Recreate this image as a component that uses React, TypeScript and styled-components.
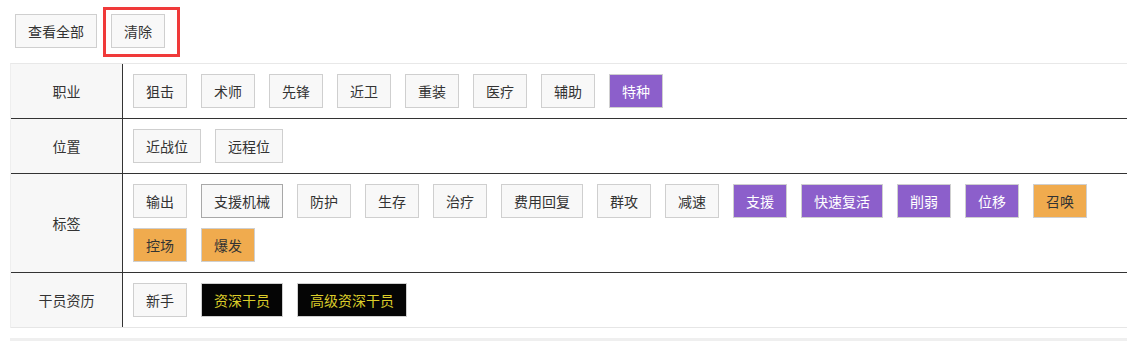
import styled, { createGlobalStyle } from 'styled-components'

type Variant = 'plain' | 'outlined' | 'purple' | 'orange' | 'elite'

interface TagItem {
  label: string
  variant?: Variant
}

interface FilterRow {
  title: string
  tags: TagItem[]
}

const rows: FilterRow[] = [
  {
    title: '职业',
    tags: [
      { label: '狙击' },
      { label: '术师' },
      { label: '先锋' },
      { label: '近卫' },
      { label: '重装' },
      { label: '医疗' },
      { label: '辅助' },
      { label: '特种', variant: 'purple' },
    ],
  },
  {
    title: '位置',
    tags: [{ label: '近战位' }, { label: '远程位' }],
  },
  {
    title: '标签',
    tags: [
      { label: '输出' },
      { label: '支援机械', variant: 'outlined' },
      { label: '防护' },
      { label: '生存' },
      { label: '治疗' },
      { label: '费用回复' },
      { label: '群攻' },
      { label: '减速' },
      { label: '支援', variant: 'purple' },
      { label: '快速复活', variant: 'purple' },
      { label: '削弱', variant: 'purple' },
      { label: '位移', variant: 'purple' },
      { label: '召唤', variant: 'orange' },
      { label: '控场', variant: 'orange' },
      { label: '爆发', variant: 'orange' },
    ],
  },
  {
    title: '干员资历',
    tags: [
      { label: '新手' },
      { label: '资深干员', variant: 'elite' },
      { label: '高级资深干员', variant: 'elite' },
    ],
  },
]

const colors: Record<Variant, { bg: string; fg: string; border: string }> = {
  plain: { bg: '#f8f8f8', fg: '#333', border: '#cfcfcf' },
  outlined: { bg: '#f8f8f8', fg: '#333', border: '#a8a8a8' },
  purple: { bg: '#8c5fcb', fg: '#fff', border: '#cfcfcf' },
  orange: { bg: '#f0ab4e', fg: '#333', border: '#cfcfcf' },
  elite: { bg: '#050505', fg: '#dccd2a', border: '#cfcfcf' },
}

export default function App() {
  return (
    <>
      <GlobalStyle />
      <Page>
        <Toolbar>
          <Tag $variant="plain">查看全部</Tag>
          <Highlighted>
            <Tag $variant="plain">清除</Tag>
            <RedMark />
          </Highlighted>
        </Toolbar>
        <Table>
          {rows.map((row, i) => (
            <Row key={row.title} $last={i === rows.length - 1}>
              <Label>{row.title}</Label>
              <Tags>
                {row.tags.map(tag => (
                  <Tag key={tag.label} $variant={tag.variant || 'plain'}>
                    {tag.label}
                  </Tag>
                ))}
              </Tags>
            </Row>
          ))}
        </Table>
        <Footer />
      </Page>
    </>
  )
}

const GlobalStyle = createGlobalStyle`
  body {
    margin: 0;
    background: #fff;
    font-family: "Noto Sans CJK SC", "Noto Sans", sans-serif;
    font-size: 14px;
    color: #333;
    overflow: hidden;
  }
`

const Page = styled.div`
  padding: 14px 0 0 10px;
`

const Toolbar = styled.div`
  display: flex;
  gap: 14px;
  padding-left: 5px;
  margin-bottom: 15px;
`

const Highlighted = styled.div`
  position: relative;
  display: flex;
`

const RedMark = styled.div`
  position: absolute;
  left: -8px;
  top: -7px;
  width: 77px;
  height: 50px;
  box-sizing: border-box;
  border: 3px solid #f03a3a;
  pointer-events: none;
`

const Tag = styled.div<{ $variant: Variant }>`
  box-sizing: border-box;
  height: 34px;
  padding: 0 12px;
  display: flex;
  align-items: center;
  line-height: 20px;
  white-space: nowrap;
  background: ${p => colors[p.$variant].bg};
  color: ${p => colors[p.$variant].fg};
  border: 1px solid ${p => colors[p.$variant].border};
`

const Table = styled.div`
  border-top: 1px solid #e8e8e8;
  border-left: 1px solid #eeeeee;
`

const Row = styled.div<{ $last: boolean }>`
  display: flex;
  border-bottom: 1px solid ${p => (p.$last ? '#e6e6e6' : '#333')};
`

const Label = styled.div`
  width: 111px;
  flex-shrink: 0;
  display: flex;
  align-items: center;
  justify-content: center;
  background: #f7f7f7;
  border-right: 1px solid #333;
`

const Tags = styled.div`
  flex: 1;
  display: flex;
  flex-wrap: wrap;
  gap: 10px 14px;
  padding: 10px 0 10px 10px;
`

const Footer = styled.div`
  margin-top: 10px;
  height: 10px;
  background: #efefef;
`
